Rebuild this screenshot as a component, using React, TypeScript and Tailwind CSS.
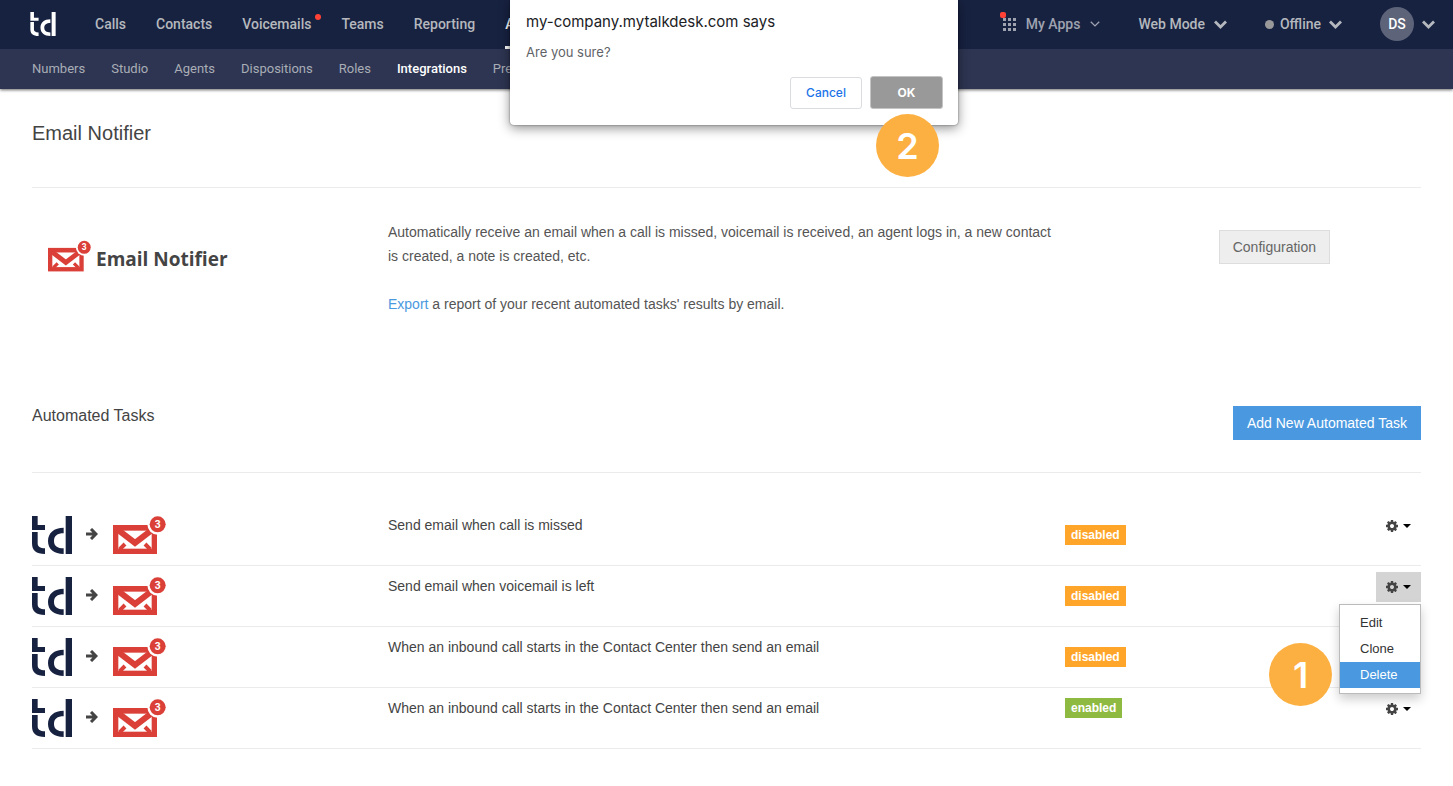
import React from "react";

const GRID = "grid grid-cols-[356fr_677fr_356fr]";

function TalkdeskLogo({ className }: { className: string }) {
  return (
    <svg viewBox="0 0 120 114" className={className} fill="currentColor" aria-hidden="true">
      <path d="M0 0h17v27h22v15H0z" />
      <path d="M0 48h17v34c0 10 7 15 22 15v17C12 114 0 104 0 82z" />
      <path d="M95 35v17C76 52 66 60 66 75s10 22 29 22v17C66 114 48 99 48 75s18-40 47-40z" />
      <path d="M101 0h19v114h-19z" />
    </svg>
  );
}

function MailIcon({ className }: { className: string }) {
  return (
    <svg viewBox="0 0 159 114" className={className} aria-hidden="true">
      <rect x="0" y="27" width="132" height="87" fill="#db4038" />
      <rect x="16" y="44" width="100" height="54" fill="#fff" />
      <path d="M10 38L66 81L122 38" fill="none" stroke="#db4038" strokeWidth="18" />
      <path d="M20 100L36 84M112 100L96 84" stroke="#db4038" strokeWidth="12" />
      <circle cx="134" cy="25" r="31" fill="#fff" />
      <circle cx="134" cy="25" r="24" fill="#db4038" />
      <text x="134" y="36" textAnchor="middle" fontSize="31" fontWeight="700" fill="#fff" className="font-[Roboto,sans-serif]">
        3
      </text>
    </svg>
  );
}

function ArrowRight() {
  return (
    <svg viewBox="0 0 36 36" className="h-3 w-3" fill="none" stroke="#444" strokeWidth="9" aria-hidden="true">
      <path d="M0 18H30M15 3L30 18L15 33" />
    </svg>
  );
}

function GearIcon() {
  return (
    <svg viewBox="128 128 1536 1536" className="h-3 w-3" fill="#444" aria-hidden="true">
      <path d="M1152 896q0-106-75-181t-181-75-181 75-75 181 75 181 181 75 181-75 75-181zm512-109v222q0 12-8 23t-20 13l-185 28q-19 54-39 91 35 50 107 138 10 12 10 25t-9 23q-27 37-99 108t-94 71q-12 0-26-9l-138-108q-44 23-91 38-16 136-29 186-7 28-36 28h-222q-14 0-24.500-8.500t-11.500-21.500l-28-184q-49-16-90-37l-141 107q-10 9-25 9-14 0-25-11-126-114-165-168-7-10-7-23 0-12 8-23 15-21 51-66.500t54-70.500q-27-50-41-99l-183-27q-13-2-21-12.500t-8-23.500v-222q0-12 8-23t19-13l186-28q14-46 39-92-40-57-107-138-10-12-10-24 0-10 9-23 26-36 98.500-107.500t94.500-71.500q13 0 26 10l138 107q44-23 91-38 16-136 29-186 7-28 36-28h222q14 0 24.500 8.500t11.500 21.500l28 184q49 16 90 37l142-107q9-9 24-9 13 0 25 10 129 119 165 170 7 8 7 22 0 12-8 23-15 21-51 66.500t-54 70.500q26 50 41 98l183 28q13 2 21 12.500t8 23.500z" />
    </svg>
  );
}

function Chevron({ thin = false }: { thin?: boolean }) {
  return (
    <svg
      viewBox="0 0 13 9"
      className={thin ? "h-2 w-[10px]" : "h-[9px] w-[13px]"}
      fill="none"
      stroke="currentColor"
      strokeWidth={thin ? 1.7 : 2.8}
      aria-hidden="true"
    >
      <path d="M1 1.500L6.500 7L12 1.500" />
    </svg>
  );
}

function AppsIcon() {
  return (
    <span className="relative flex">
      <svg viewBox="0 0 13 13" className="h-[13px] w-[13px]" fill="currentColor" aria-hidden="true">
        {[0, 5, 10].map((y) => [0, 5, 10].map((x) => <rect key={`${x}-${y}`} x={x} y={y} width="3" height="3" />))}
      </svg>
      <span className="absolute -left-[3px] -top-[6px] h-[6px] w-[6px] rounded-[2px] bg-[#ff4136]" />
    </span>
  );
}

const mainNav = ["Calls", "Contacts", "Voicemails", "Teams", "Reporting", "Admin"];
const subNav = ["Numbers", "Studio", "Agents", "Dispositions", "Roles", "Integrations", "Preferences"];

function Header() {
  return (
    <header className="bg-[#2d3552] font-[Roboto,sans-serif] text-[#b5b8bd] shadow-[0_1px_3px_rgba(0,0,0,0.6)]">
      <div className="flex h-[49px] items-stretch justify-between bg-[#172241] pl-[30px] pr-[18px] text-sm font-medium">
        <div className="flex items-stretch">
          <a href="#home" aria-label="Talkdesk" className="mr-[39px] flex items-center pb-px text-white">
            <TalkdeskLogo className="h-6 w-[26px]" />
          </a>
          <nav className="flex items-stretch gap-[30px]">
            {mainNav.map((label) => (
              <a
                key={label}
                href={`#${label.toLowerCase()}`}
                className={`relative flex items-center border-b-3 pt-px ${
                  label === "Admin" ? "border-b-white text-white" : "border-b-transparent"
                }`}
              >
                {label}
                {label === "Voicemails" && (
                  <span className="absolute -right-[10px] top-[14px] h-[6px] w-[6px] rounded-full bg-[#ff4136]" />
                )}
              </a>
            ))}
          </nav>
        </div>
        <div className="flex items-center pb-px">
          <button className="flex items-center text-[#9fa3b0]">
            <AppsIcon />
            <span className="ml-[10px] mr-[10px]">My Apps</span>
            <Chevron thin />
          </button>
          <button className="ml-[38px] flex items-center gap-[9px]">
            Web Mode
            <Chevron />
          </button>
          <button className="ml-[38px] flex items-center">
            <span className="mr-[6px] h-[9px] w-[9px] rounded-full bg-[#999]" />
            Offline
            <span className="ml-2">
              <Chevron />
            </span>
          </button>
          <button className="ml-[38px] flex items-center gap-2">
            <span className="flex h-[34px] w-[34px] items-center justify-center rounded-full bg-[#5d6479] text-white">DS</span>
            <Chevron />
          </button>
        </div>
      </div>
      <nav className="flex h-10 items-center gap-[26px] px-8 text-[13px]">
        {subNav.map((label) => (
          <a
            key={label}
            href={`#${label.toLowerCase()}`}
            className={label === "Integrations" ? "font-medium text-white" : "text-[#a9adb6]"}
          >
            {label}
          </a>
        ))}
      </nav>
    </header>
  );
}

function StepBadge({ step, className }: { step: number; className: string }) {
  return (
    <span
      className={`absolute flex h-[63px] w-[63px] items-center justify-center rounded-full bg-[#fdb042] font-[Inter,sans-serif] text-4xl font-semibold text-white ${className}`}
    >
      {step}
    </span>
  );
}

function ConfirmDialog() {
  return (
    <div
      role="dialog"
      aria-labelledby="confirm-title"
      className="absolute left-[510px] top-0 z-20 w-[448px] rounded-b-sm bg-white pb-4 pl-4 pr-[15px] pt-3 font-[Inter,sans-serif] shadow-[0_3px_12px_rgba(0,0,0,0.45),0_0_2px_rgba(0,0,0,0.5)]"
    >
      <h2 id="confirm-title" className="text-[15px] leading-5 text-[#202124]">
        my-company.mytalkdesk.com says
      </h2>
      <p className="mt-[10px] text-[13px] leading-5 text-[#5f6368]">Are you sure?</p>
      <div className="mt-[14px] flex items-center justify-end gap-2 text-xs">
        <button className="h-8 w-[72px] rounded-[3px] border border-[#dadce0] font-medium text-[#1a73e8]">Cancel</button>
        <button className="h-[33px] w-[73px] rounded-[3px] border border-[#c4c4c4] bg-[#999] font-bold text-white">OK</button>
      </div>
      <StepBadge step={2} className="left-[366px] top-[114px]" />
    </div>
  );
}

function TaskMenu() {
  return (
    <div className="absolute right-0 top-8 z-10">
      <ul
        role="menu"
        className="w-[82px] border border-[#bbb] bg-white py-[5px] text-[13px] leading-[26px] text-[#333] shadow-[0_5px_10px_rgba(0,0,0,0.2)]"
      >
        {["Edit", "Clone", "Delete"].map((item) => (
          <li key={item} role="none">
            <button
              role="menuitem"
              className={`block w-full pl-5 text-left ${item === "Delete" ? "bg-[#4a99e0] text-white" : ""}`}
            >
              {item}
            </button>
          </li>
        ))}
      </ul>
      <StepBadge step={1} className="right-[89px] top-[39px]" />
    </div>
  );
}

const tasks = [
  { name: "Send email when call is missed", enabled: false, open: false },
  { name: "Send email when voicemail is left", enabled: false, open: true },
  { name: "When an inbound call starts in the Contact Center then send an email", enabled: false, open: false },
  { name: "When an inbound call starts in the Contact Center then send an email", enabled: true, open: false },
];

function TaskTable() {
  return (
    <table className="mt-8 block w-full text-sm">
      <tbody className="block">
        {tasks.map((task, index) => (
          <tr key={index} className={`${GRID} h-[61px] border-b border-[#ebebeb]`}>
            <td className="flex items-start pt-[11px]">
              <TalkdeskLogo className="h-[38px] w-10 text-[#172241]" />
              <span className="ml-[14px] mr-[15px] flex h-9 items-center">
                <ArrowRight />
              </span>
              <MailIcon className="h-[38px] w-[53px]" />
            </td>
            <td className="pt-[10px] leading-5">{task.name}</td>
            <td className="flex items-start justify-between">
              <span
                className={`px-[6px] text-xs font-bold leading-5 text-white ${
                  task.enabled ? "mt-[10px] bg-[#8fba42]" : "mt-5 bg-[#ffa529]"
                }`}
              >
                {task.enabled ? "enabled" : "disabled"}
              </span>
              <div className="relative mt-[6px]">
                <button
                  aria-label="Task actions"
                  aria-expanded={task.open}
                  className={`flex h-[30px] w-[45px] items-center justify-center gap-[5px] ${task.open ? "bg-[#d4d4d4]" : ""}`}
                >
                  <GearIcon />
                  <svg viewBox="0 0 8 4" className="h-1 w-2" aria-hidden="true">
                    <path d="M0 0h8L4 4z" />
                  </svg>
                </button>
                {task.open && <TaskMenu />}
              </div>
            </td>
          </tr>
        ))}
      </tbody>
    </table>
  );
}

export default function App() {
  return (
    <div className="relative bg-white font-['Liberation_Sans',Arial,sans-serif] text-[#444]">
      <Header />
      <ConfirmDialog />
      <main className="px-8 pb-9">
        <h1 className="border-b border-[#ebebeb] pb-10 pt-[30px] text-xl leading-7">Email Notifier</h1>

        <section className={`${GRID} pt-8 text-sm`}>
          <div className="flex items-start pl-4 pt-5">
            <MailIcon className="h-8 w-[43px]" />
            <span className="ml-[5px] mt-[5px] font-['Open_Sans',sans-serif] text-[19px] font-bold leading-7">Email Notifier</span>
          </div>
          <div className="leading-6 text-[#555]">
            <p className="pr-1">
              Automatically receive an email when a call is missed, voicemail is received, an agent logs in, a new contact is
              created, a note is created, etc.
            </p>
            <p className="mt-6">
              <a href="#export" className="text-[#4a99e0]">
                Export
              </a>{" "}
              a report of your recent automated tasks' results by email.
            </p>
          </div>
          <div className="pr-[91px] pt-[10px] text-right">
            <button className="h-[34px] border border-[#ddd] bg-[#eee] px-[13px] text-[#666]">Configuration</button>
          </div>
        </section>

        <section className="mt-[90px]">
          <div className="flex items-start justify-between border-b border-[#ebebeb] pb-8">
            <h2 className="text-base leading-5">Automated Tasks</h2>
            <button className="h-[34px] bg-[#4a99e0] px-[14px] text-sm text-white">Add New Automated Task</button>
          </div>
          <TaskTable />
        </section>
      </main>
    </div>
  );
}
